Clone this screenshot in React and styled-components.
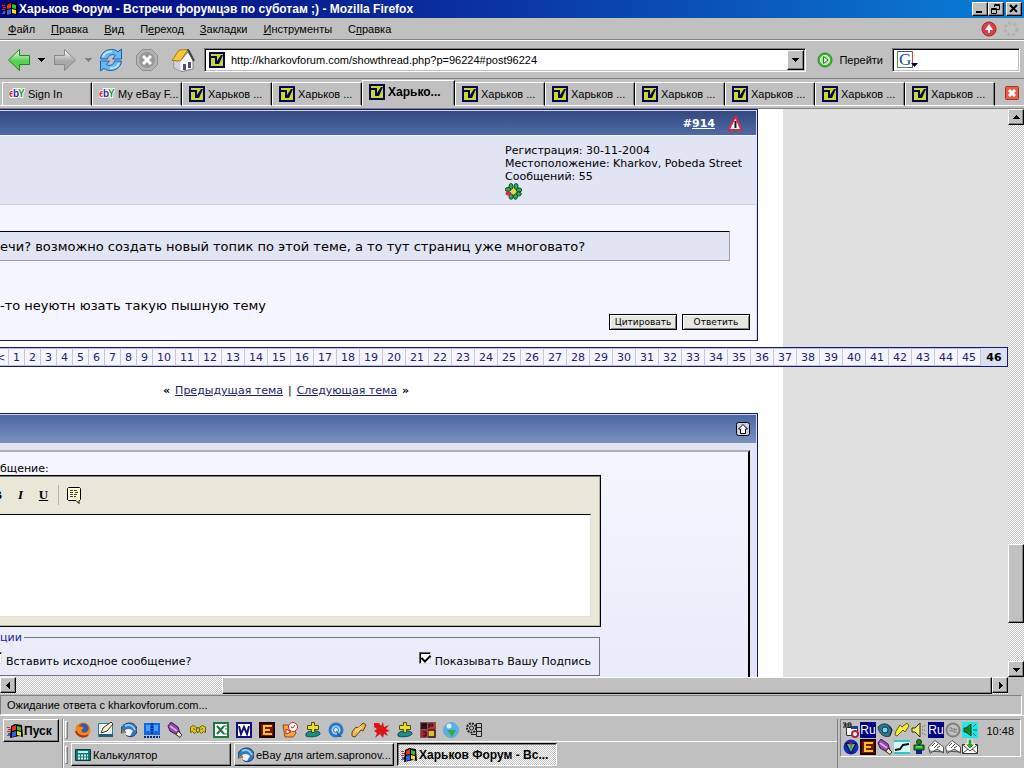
import React from "react";
import styled, { createGlobalStyle, css } from "styled-components";

const GlobalStyle = createGlobalStyle`
  * { box-sizing: border-box; }
  body { margin: 0; background: #c0c0c0; }
  button, input, textarea { font: inherit; color: inherit; border-radius: 0; }
  button { padding: 0; border: 0; background: none; }
  svg { display: block; flex: none; }
`;

const ui = `"Liberation Sans", Arial, sans-serif`;
const verdana = `"DejaVu Sans", Verdana, sans-serif`;

const raised = css`
  border: 1px solid;
  border-color: #fff #000 #000 #fff;
  box-shadow: inset -1px -1px 0 #808080;
`;
const sunken = css`
  border: 1px solid;
  border-color: #808080 #fff #fff #808080;
`;
const dither = css`
  background: repeating-conic-gradient(#fff 0 25%, #c0c0c0 0 50%) 0 0 / 2px 2px;
`;

const Screen = styled.div`
  display: flex;
  flex-direction: column;
  height: 100vh;
  overflow: hidden;
  background: #c0c0c0;
  color: #000;
  font: 11px/16px ${ui};
`;

/* ---------- window frame ---------- */
const TitleBar = styled.header`
  display: flex;
  align-items: center;
  height: 18px;
  padding: 0 2px;
  background: linear-gradient(90deg, #00067c, #0a2f9e 45%, #0a80d4);
  color: #fff;
`;
const Title = styled.h1`
  flex: 1;
  margin: 0 0 0 1px;
  font: bold 12px/16px ${ui};
  white-space: nowrap;
`;
const FrameButton = styled.button`
  ${raised}
  display: flex;
  align-items: center;
  justify-content: center;
  width: 16px;
  height: 14px;
  margin-left: ${(p) => (p.$apart ? "2px" : "0")};
  background: #c0c0c0;
  color: #000;
`;
const MenuBar = styled.nav`
  display: flex;
  align-items: center;
  height: 23px;
  padding-right: 5px;
  border-bottom: 1px solid #fff;
  box-shadow: inset 0 -1px 0 #808080;
`;
const MenuItem = styled.button`
  padding: 0 8px;
  line-height: 16px;
`;
const Spacer = styled.div`
  flex: 1;
`;
const BarIcons = styled.div`
  display: flex;
  gap: 6px;
  align-items: center;
`;
const Toolbar = styled.div`
  display: flex;
  align-items: center;
  height: 38px;
  padding: 0 4px 0 6px;
  border-bottom: 1px solid #808080;
`;
const ToolButton = styled.button`
  display: flex;
  align-items: center;
  justify-content: center;
  width: ${(p) => p.$w || 36}px;
  height: 26px;
`;
const AddressBox = styled.div`
  display: flex;
  flex: 1;
  align-items: center;
  min-width: 0;
  height: 24px;
  margin-left: 8px;
  padding-left: 4px;
  background: #fff;
  border: 1px solid;
  border-color: #808080 #fff #fff #808080;
  box-shadow: inset 1px 1px 0 #000, inset -1px -1px 0 #c0c0c0;
`;
const TextInput = styled.input`
  flex: 1;
  width: 0;
  min-width: 0;
  height: 18px;
  padding: 0 0 0 6px;
  border: 0;
  outline: 0;
  background: none;
`;
const DropButton = styled.button`
  ${raised}
  display: flex;
  align-items: center;
  justify-content: center;
  width: 17px;
  height: 20px;
  margin-right: 1px;
  background: #c0c0c0;
`;
const GoButton = styled.button`
  display: flex;
  align-items: center;
  gap: 6px;
  padding: 0 9px 0 11px;
`;
const SearchBox = styled(AddressBox)`
  flex: 0 0 128px;
  margin-left: 0;
`;

const TabBar = styled.div`
  display: flex;
  align-items: flex-end;
  height: 30px;
  padding: 0 4px 3px 2px;
  background: linear-gradient(#808080, #808080) 0 100% / 100% 1px no-repeat,
    linear-gradient(#fff, #fff) 0 26px / 100% 1px no-repeat;
`;
const Tab = styled.button`
  display: flex;
  flex: 0 1 ${(p) => (p.$active ? 93 : 90)}px;
  align-items: center;
  gap: 3px;
  min-width: 0;
  height: ${(p) => (p.$active ? 26 : 24)}px;
  padding: 0 0 ${(p) => (p.$active ? 2 : 0)}px 6px;
  overflow: hidden;
  white-space: nowrap;
  background: #c0c0c0;
  border: 1px solid;
  border-color: #fff #000 ${(p) => (p.$active ? "#c0c0c0" : "#fff")} #fff;
  box-shadow: inset -1px 0 0 #808080;
  font-size: ${(p) => (p.$active ? 12 : 11)}px;
  font-weight: ${(p) => (p.$active ? "bold" : "normal")};
`;

/* ---------- page view with scroll bars ---------- */
const View = styled.div`
  display: grid;
  flex: 1;
  grid-template: minmax(0, 1fr) 17px / minmax(0, 1fr) 16px;
  min-height: 0;
`;
const VScroll = styled.div`
  ${dither}
  display: flex;
  flex-direction: column;
`;
const HScroll = styled.div`
  ${dither}
  display: flex;
`;
const ScrollButton = styled.button`
  ${raised}
  display: flex;
  flex: none;
  align-items: center;
  justify-content: center;
  width: 16px;
  height: 16px;
  background: #c0c0c0;
`;
const Track = styled.div`
  flex: ${(p) => p.$grow};
`;
const Thumb = styled.div`
  ${raised}
  flex: ${(p) => p.$grow};
  background: #c0c0c0;
`;

const Page = styled.main`
  display: grid;
  grid-template-columns: minmax(0, 1fr) 225px;
  grid-template-rows: 232px 6px 20px 46px 1fr;
  overflow: hidden;
  background: #e0e0e0;
  font: 11px/13px ${verdana};
`;
const Sheet = styled.div`
  grid-area: 1 / 1 / -1 / 2;
  background: #fff;
`;
const Panel = styled.section`
  display: flex;
  flex-direction: column;
  grid-area: ${(p) => p.$row} / 1;
  min-height: 0;
  margin-right: 25px;
  border: 1px solid #1a1a6c;
  border-width: 1px 1px ${(p) => (p.$open ? 0 : 1)}px 0;
  box-shadow: inset -1px 1px 0 #d1d7ee;
  background: #f5f5ff;
  overflow: hidden;
`;
const PanelHead = styled.div`
  display: flex;
  flex: none;
  align-items: center;
  justify-content: flex-end;
  gap: 12px;
  height: ${(p) => p.$h}px;
  margin: 1px 1px 0 0;
  padding-right: ${(p) => p.$pad}px;
  background: ${(p) => p.$bg};
  color: #fff;
  font-weight: bold;
`;
const PostLink = styled.a`
  color: #fff;
`;
const AuthorInfo = styled.div`
  display: flex;
  justify-content: flex-end;
  height: 71px;
  padding: 8px 6px 0 0;
  background: #e1e4f2;
  border-top: 1px solid #f5f5ff;
  border-bottom: 1px solid #d1d1e1;
  white-space: nowrap;
`;
const InfoLines = styled.div`
  width: 246px;
`;
const PostBody = styled.div`
  display: flex;
  flex: 1;
  flex-direction: column;
  padding: 26px 7px 10px 0;
  font-size: 13px;
  line-height: 16px;
  white-space: nowrap;
`;
const Quote = styled.blockquote`
  height: 30px;
  margin: 0 20px 37px 0;
  padding: 7px 0 0;
  background: #e1e4f2;
  border: 1px solid #9c9cac;
  border-top-color: #000;
  border-left: 0;
`;
const PostText = styled.p`
  margin: 0;
`;
const PostActions = styled.div`
  display: flex;
  gap: 5px;
  justify-content: flex-end;
  margin-top: auto;
`;
const SmallButton = styled.button`
  width: 68px;
  height: 16px;
  border: 1px solid #000;
  box-shadow: inset 1px 1px 0 #fff, inset -1px -1px 0 #808080;
  background: #e6e6e2;
  font: 9px/12px ${verdana};
`;

const PageNav = styled.nav`
  display: flex;
  grid-area: 3 / 1 / 4 / -1;
  justify-content: flex-end;
  overflow: hidden;
  background: #f5f5ff;
  border: 1px solid #1a1a6c;
  border-left: 0;
  box-shadow: inset 0 1px 0 #b9bde0, inset 0 -1px 0 #b9bde0, inset -1px 0 0 #b9bde0;
`;
const pageCell = css`
  flex: none;
  border-right: 1px solid #c6c6dc;
  line-height: 19px;
  text-align: center;
`;
const PageLink = styled.a`
  ${pageCell}
  width: ${(p) => p.$w}px;
  color: #22226c;
  text-decoration: none;
`;
const CurrentPage = styled.strong`
  ${pageCell}
  width: 26px;
  border: 0;
  background: #dcdff0;
`;
const ThreadNav = styled.div`
  display: flex;
  grid-area: 4 / 1;
  gap: 5px;
  padding: 17px 0 0 163px;
  white-space: nowrap;
  a { color: #22226c; }
`;

const ReplyFrame = styled.div`
  display: flex;
  flex: 1;
  min-height: 0;
  padding: 7px 7px 0 0;
  background: #e1e4f2;
`;
const ReplyBox = styled.form`
  flex: 1;
  padding-top: 10px;
  border-top: 2px solid #b0b0bc;
  border-right: 2px solid #000;
  background: linear-gradient(#f5f5ff, #e9ebf9);
`;
const EditorBox = styled.div`
  width: 601px;
  max-width: 100%;
  height: 152px;
  padding: 0 9px 0 0;
  background: #e9e8d8;
  border: 1px solid #000;
  border-left: 0;
  box-shadow: inset 0 1px 0 #808080, inset -1px -1px 0 #b4b4a8;
`;
const EditorBar = styled.div`
  display: flex;
  align-items: center;
  height: 38px;
  margin-left: -14px;
`;
const FormatButton = styled.button`
  display: flex;
  align-items: center;
  justify-content: center;
  width: 23px;
  height: 22px;
  font: bold 13px/16px "Liberation Serif", serif;
`;
const BarLine = styled.span`
  width: 1px;
  height: 20px;
  margin: 0 3px;
  background: #b4b4a8;
`;
const Message = styled.textarea`
  display: block;
  width: 100%;
  height: 103px;
  resize: none;
  outline: 0;
  background: #fff;
  border: 1px solid;
  border-color: #000 #e0e0d8 #e0e0d8 #000;
  border-left: 0;
`;
const Options = styled.fieldset`
  display: flex;
  justify-content: space-between;
  width: 600px;
  max-width: 100%;
  height: 45px;
  margin: 4px 0 0;
  padding: 8px 8px 0 0;
  border: 1px solid #74747c;
  border-left: 0;
`;
const Legend = styled.legend`
  padding: 0 2px 0 0;
  color: #22229c;
`;
const Check = styled.label`
  display: flex;
  gap: 4px;
  margin-left: ${(p) => p.$shift || 0}px;
  line-height: 20px;
`;
const CheckBox = styled.input`
  appearance: none;
  width: 12px;
  height: 12px;
  margin: 0;
  background: #fff;
  border: 1px solid;
  border-color: #606060 #dcdcdc #dcdcdc #606060;
  box-shadow: inset 1px 1px 0 #000;
  &:checked::after {
    content: "";
    display: block;
    width: 4px;
    height: 7px;
    margin: 0 0 0 3px;
    border: solid #000;
    border-width: 0 2px 2px 0;
    transform: rotate(45deg);
  }
`;

const StatusBar = styled.footer`
  ${sunken}
  height: 20px;
  margin: 1px 2px 0 0;
  padding: 1px 6px;
`;

/* ---------- task bar ---------- */
const TaskBar = styled.div`
  display: flex;
  height: 53px;
  border-top: 1px solid #fff;
  padding: 3px 3px 0 3px;
`;
const StartButton = styled.button`
  ${raised}
  display: flex;
  align-items: center;
  gap: 1px;
  width: 56px;
  height: 23px;
  padding-left: 3px;
  font-size: 12px;
  font-weight: bold;
`;
const Bands = styled.div`
  flex: 1;
  min-width: 0;
  margin-left: 3px;
  border-left: 1px solid #808080;
  border-right: 1px solid #808080;
  box-shadow: inset 1px 0 0 #fff;
`;
const Band = styled.div`
  display: flex;
  align-items: center;
  gap: ${(p) => p.$gap}px;
  height: ${(p) => p.$h}px;
  padding-left: 2px;
  border-bottom: ${(p) => (p.$line ? "1px solid #fff" : "0")};
`;
const Handle = styled.span`
  width: 3px;
  height: 18px;
  border: 1px solid;
  border-color: #fff #808080 #808080 #fff;
`;
const IconButton = styled.button`
  width: 16px;
  height: 16px;
`;
const TaskButton = styled.button`
  ${raised}
  display: flex;
  align-items: center;
  gap: 2px;
  width: 160px;
  height: 23px;
  padding-left: 3px;
  overflow: hidden;
  white-space: nowrap;
  ${(p) =>
    p.$active &&
    css`
      ${dither}
      border-color: #000 #fff #fff #000;
      box-shadow: inset 1px 1px 0 #808080;
      font-size: 12px;
      font-weight: bold;
    `}
`;
const Tray = styled.div`
  ${sunken}
  display: flex;
  align-items: flex-start;
  justify-content: space-between;
  width: 181px;
  height: 38px;
  margin-left: 2px;
  padding: 2px 6px 0 2px;
`;
const TrayIcons = styled.div`
  display: grid;
  grid-template-columns: repeat(8, 16px);
  gap: 1px;
`;
const Clock = styled.time`
  padding-top: 1px;
`;

/* ---------- drawings ---------- */
const Svg = ({ w = 16, h = 16, box, children, ...rest }) => (
  <svg width={w} height={h} viewBox={box || `0 0 ${w} ${h}`} aria-hidden="true" {...rest}>
    {children}
  </svg>
);
const Triangle = ({ dir = "down", color = "#000" }) => (
  <Svg w={7} h={7} fill={color} shapeRendering="crispEdges">
    <path d={{ down: "M0 2h7v1H6v1H5v1H4v1H3V5H2V4H1V3H0z", up: "M0 5h7V4H6V3H5V2H4V1H3v1H2v1H1v1H0z", left: "M5 0v7H4V6H3V5H2V4H1V3h1V2h1V1h1V0z", right: "M2 0v7h1V6h1V5h1V4h1V3H5V2H4V1H3V0z" }[dir]} />
  </Svg>
);
const WinFlag = () => (
  <Svg>
    <path d="M0 4h3v1H0zM1 6h3v1H1zM0 8h3v1H0zM1 10h3v1H1z" fill="#e02020" />
    <path d="M1 11h3v1H1zM0 12h3v1H0z" fill="#3060f0" />
    <path d="M4 3l4-2 7 1 1 12-4-1-4 1-5 1z" fill="#000" />
    <path d="M5 4l4-2v5L5 8z" fill="#f03020" />
    <path d="M10 3l4 1v4l-4-1z" fill="#30c030" />
    <path d="M5 9l4-1v5l-4 1z" fill="#3060f0" />
    <path d="M10 8l4 1v4l-4-1z" fill="#f0e020" />
  </Svg>
);
const Favicon = () => (
  <Svg>
    <path fill="#08084c" d="M0 0h16v16H0z" />
    <path fill="#c8d830" d="M2 2h12v12H2z" />
    <path fill="#08084c" d="M2 4h6v5l4-6h2l-4 9H6V6H2z" />
  </Svg>
);
const Ebay = () => (
  <Svg fontFamily="Liberation Sans, sans-serif" fontWeight="bold" fontSize="10" stroke="#fff" strokeWidth="2" paintOrder="stroke">
    <text x="0" y="11" fill="#e01828">e</text>
    <text x="4" y="11" fill="#2828a0">b</text>
    <text x="9" y="11" fill="#289830">Y</text>
  </Svg>
);
const NavArrow = ({ fill, line, flip }) => (
  <Svg w={24} h={24} style={flip ? { transform: "scaleX(-1)" } : undefined}>
    <defs>
      <linearGradient id={flip ? "fw" : "bk"} x1="0" y1="0" x2="0" y2="1">
        <stop offset="0" stopColor="#fff" />
        <stop offset=".55" stopColor={fill} />
      </linearGradient>
    </defs>
    <path d="M1.500 12 12.500 1.500v6h10v9h-10v6z" fill={`url(#${flip ? "fw" : "bk"})`} stroke={line} strokeLinejoin="round" />
  </Svg>
);
const Reload = () => (
  <Svg w={24} h={24} fill="#68b8f0" stroke="#1860b0" strokeLinejoin="round">
    <path d="M1.500 11C2 5 7 1.500 12.500 1.500c3 0 5 .8 6.500 2.300L22.500 1v10h-9l3-3.500c-3-2-7-.5-8 3.500z" />
    <path d="M22.500 13C22 19 17 22.500 11.500 22.500c-3 0-5-.8-6.500-2.300L1.500 23V13h9l-3 3.500c3 2 7 .5 8-3.500z" />
    <path d="M4 9c1-4 5-6 9-5.500M20 15c-1 4-5 5.500-9 5" fill="none" stroke="#b8e4ff" strokeWidth="2" />
  </Svg>
);
const Stop = () => (
  <Svg w={24} h={24}>
    <path d="M7.500 1.500h9l6 6v9l-6 6h-9l-6-6v-9z" fill="#b4b4b4" stroke="#8c8c8c" />
    <circle cx="12" cy="12" r="8" fill="#989898" />
    <path d="M8 8l8 8M16 8l-8 8" stroke="#fff" strokeWidth="3" />
  </Svg>
);
const Home = () => (
  <Svg w={24} h={24} strokeLinejoin="round">
    <path d="M3 12h7l7-8 5 8v9l-11 2.500L3 20z" fill="#fafaff" stroke="#808088" />
    <path d="M3.500 12h6v11l-6-3z" fill="#d0d0d8" />
    <path d="M1 12.500 8 2l9-.5L9.500 13z" fill="#f4c838" stroke="#a87818" />
    <path d="M17 1.500 23 13" stroke="#404048" strokeWidth="2" />
    <path d="M12 16h3v6h-3zM17 14h3v6h-3z" fill="#505068" />
  </Svg>
);
const Go = () => (
  <Svg>
    <circle cx="8" cy="8" r="7" fill="#48b838" stroke="#208820" />
    <circle cx="8" cy="8" r="4.500" fill="#a0e090" stroke="#fff" />
    <path d="M6.500 4.500 11 8l-4.500 3.500z" fill="#fff" stroke="#208820" />
  </Svg>
);
const Google = () => (
  <Svg w={21} h={18}>
    <path d="M.5.5h15v16H.5z" fill="#fff" stroke="#3858b0" />
    <path d="M15.500 1v10" stroke="#d84030" fill="none" />
    <path d="M.5 1v15.500H11" stroke="#40a040" fill="none" />
    <text x="2" y="14" fontFamily="Liberation Serif, serif" fontSize="17" fill="#2848a8">G</text>
    <path d="M14 12h7l-3.500 4z" fill="#000" />
  </Svg>
);
const Update = () => (
  <Svg>
    <circle cx="8" cy="8" r="7" fill="#d84048" stroke="#a82028" />
    <path d="M8 3l4 6h-3v3H7V9H4z" fill="#fff" />
  </Svg>
);
const Throbber = () => (
  <Svg>
    <circle cx="8" cy="8" r="6" fill="none" stroke="#b2b2b2" strokeWidth="3" strokeDasharray="3 2" />
  </Svg>
);
const CloseTab = () => (
  <Svg>
    <rect x="1.500" y="1.500" width="13" height="13" rx="1" fill="#e06050" stroke="#b03020" />
    <path d="M5 5l6 6M11 5l-6 6" stroke="#fff" strokeWidth="3" />
  </Svg>
);
const Report = () => (
  <Svg>
    <path d="M8.500 1.500 14.500 15h-13z" fill="#fff" stroke="#d82848" strokeWidth="2" strokeLinejoin="round" />
    <path d="M7.500 6h2v7h-2z" fill="#101020" />
  </Svg>
);
const Flower = () => (
  <Svg w={17} h={17}>
    <g fill="#38a850" stroke="#0c4c20">
      <ellipse cx="6" cy="3.500" rx="2" ry="3" /><ellipse cx="11" cy="3.500" rx="2" ry="3" />
      <ellipse cx="14" cy="7" rx="2.800" ry="2" /><ellipse cx="13.500" cy="11" rx="2.800" ry="2" />
      <ellipse cx="10.500" cy="13.500" rx="2" ry="2.800" /><ellipse cx="6" cy="13.500" rx="2" ry="2.800" />
      <ellipse cx="3" cy="6.500" rx="2.800" ry="2" />
    </g>
    <ellipse cx="3.500" cy="10.500" rx="3" ry="2" fill="#d02850" />
    <circle cx="8.500" cy="8.500" r="2.500" fill="#e0d840" />
  </Svg>
);
const Collapse = () => (
  <Svg w={14} h={14}>
    <rect x=".5" y=".5" width="13" height="13" rx="2" fill="#c8d0e4" stroke="#000" />
    <path d="M7 2.500 11.500 7H9.500v4.500h-5V7h-2z" fill="#fff" stroke="#000" />
  </Svg>
);
const QuoteIcon = () => (
  <Svg w={14} h={17}>
    <path d="M1.500.5h11l1 1v11l-1 1H12v3l-3-3H1.500l-1-1v-11z" fill="#ffffd0" stroke="#000" />
    <path d="M3 3.500h8M3 5.500h4m1 0h3M3 7.500h3m1 0h4M3 9.500h6" stroke="#404040" strokeDasharray="3 1" />
  </Svg>
);

/* small desktop icons, one drawing per program */
const glyphs = {
  firefox: (
    <>
      <circle cx="8" cy="8" r="7.500" fill="#e87818" />
      <circle cx="8.500" cy="6.500" r="5" fill="#3858a8" />
      <path d="M1 4l2-2 1 3c2-1 4 0 5 1-2 1-3 2-2 4 3 2 6 0 8-4 1 6-3 9.500-8 9-5-.8-7-5-6-11z" fill="#f08820" />
      <path d="M1 9c1 5 8 7 12 4" fill="none" stroke="#b83010" strokeWidth="2" />
    </>
  ),
  pen: (
    <>
      <path d="M.5 1.500h14v13H.5z" fill="#f0f4f4" stroke="#288098" />
      <path d="M1 12h14v3H1z" fill="#20607c" />
      <path d="M3 11l2-5 8-6 2 2-6 7z" fill="#f8f0d0" stroke="#403010" />
    </>
  ),
  bird: (
    <>
      <path d="M0 7C1 3 5 1 9 1s8 4 7 8c-1 6-8 7-11 4l1-3-6 1z" fill="#3878b8" stroke="#183c70" />
      <path d="M4 8c3-2 6-1 8 1l-3 5-4-1z" fill="#f0f4f8" />
      <path d="M4 4c4-2 8-1 10 4" stroke="#90c8f0" fill="none" strokeWidth="2" />
      <path d="M1 10h4" stroke="#c07830" strokeWidth="2" />
    </>
  ),
  book: (
    <>
      <path d="M0 1h16v12H0z" fill="#1068e8" />
      <path d="M2 4h4M2 6h4M2 8h4M10 4h4M10 6h4M10 8h4" stroke="#80e0ff" />
      <path d="M8 1v12M0 15h16" stroke="#002880" strokeWidth="2" strokeDasharray="2 1" />
    </>
  ),
  pencil: (
    <>
      <path d="M1 4l3-4 7 5 2 6-3 2-7-4z" fill="#9048a8" stroke="#401858" />
      <path d="M3 4l7 5" stroke="#e0a8e8" strokeWidth="2" />
      <path d="M11 9l4 4-2 2.500-4-3z" fill="#f0e8c0" stroke="#303030" />
    </>
  ),
  bat: (
    <g fill="#d8c820" stroke="#686008">
      <path d="M.5 5l3-1.500 3 2v4l-2 2-2-2-2 1zM15.500 5l-3-1.500-3 2v4l2 2 2-2 2 1z" />
      <path d="M6 8l2-3 2 3-2 3z" />
      <path d="M3 7h2M11 7h2" />
    </g>
  ),
  excel: (
    <>
      <path d="M1 1h14v14H1z" fill="#fff" stroke="#207840" strokeWidth="2" />
      <path d="M4 4l7 8M11 4l-7 8" stroke="#207840" strokeWidth="2" />
      <path d="M11 4h3M12 7h2M11 12h3" stroke="#207840" />
    </>
  ),
  word: (
    <>
      <path d="M1 1h14v14H1z" fill="#fff" stroke="#101078" strokeWidth="2" />
      <path d="M3 4l2 8 3-7 3 7 2-8" stroke="#101078" strokeWidth="2" fill="none" />
    </>
  ),
  edit: (
    <>
      <path d="M1 1h14v14H1z" fill="#701810" stroke="#200000" strokeWidth="2" />
      <path d="M13 4H5v8h8M5 8h6" stroke="#ffc020" strokeWidth="2" fill="none" />
    </>
  ),
  chat: (
    <>
      <path d="M1 3h10l3 8-3 4H3z" fill="#f8a838" stroke="#a04010" />
      <circle cx="11" cy="5" r="4.500" fill="#fff" stroke="#c02828" />
      <path d="M9 5l2 1 2-3M4 7v5l5-2z" stroke="#c02828" fill="#fff" />
    </>
  ),
  add: (
    <>
      <path d="M1 12c0-3 12-5 14-1 1 3-9 5-14 3z" fill="#189090" stroke="#084850" />
      <path d="M6.500.5h3v3h4v4h-4v3h-3v-3h-4v-4h4z" fill="#e8e020" stroke="#505000" />
    </>
  ),
  quick: (
    <>
      <circle cx="8" cy="8" r="6" fill="#b8d8f0" stroke="#2878c8" strokeWidth="3" />
      <circle cx="8" cy="8" r="2.500" fill="#e8f4fc" stroke="#2870b8" />
      <path d="M8 8l6 7h-4z" fill="#2060a8" />
    </>
  ),
  amp: (
    <>
      <path d="M1 10l4-5 2 1 5-5 3 2-3 6-2-1-6 7-3-1z" fill="#f0b848" stroke="#684010" />
      <path d="M4 9l6-5M6 10l5-5" stroke="#fff0b0" />
    </>
  ),
  splat: (
    <path d="M0 1h5l2 3 2-4 1 5 5-2-3 4 4 2-4 1 2 4-4-2-1 4-3-4-5 4 2-5-3-2 3-2-3-2z" fill="#d81818" />
  ),
  media: (
    <>
      <path d="M0 0h16v16H0z" fill="#905050" />
      <path d="M1 1h6v6H1z" fill="#301820" /><path d="M8 1h7v6H8z" fill="#c83030" />
      <path d="M1 8h6v7H1z" fill="#b02030" /><path d="M9 9h5v5H9z" fill="#e0c020" />
      <path d="M2 6V2l2 2 2-2v4M9 6V2h4v2H9M3 10h3v4H3M8 8h7v7H8" stroke="#101010" fill="none" />
    </>
  ),
  globe: (
    <>
      <circle cx="8" cy="8" r="7.500" fill="#58b0e8" stroke="#60a8d8" />
      <path d="M4 8h9l-4 7z" fill="#38a848" />
      <circle cx="6" cy="4" r="2.500" fill="#d8f0ff" />
    </>
  ),
  film: (
    <g fill="none" stroke="#202020">
      <circle cx="5.500" cy="6" r="4.500" strokeWidth="2" strokeDasharray="2 1" />
      <circle cx="5.500" cy="6" r="2" />
      <path d="M10.500 1.500h5v13h-5zM10 5.500h6M10 9.500h6M5 12.500h6" />
    </g>
  ),
  calc: (
    <>
      <path d="M.5 2.500h15v11H.5z" fill="#107878" stroke="#043c3c" />
      <path d="M3 4h10v2H3z" fill="#c0f0e0" />
      <path d="M3 8.500h10M3 11.500h10" stroke="#e0f0f0" strokeWidth="2" strokeDasharray="2 1" />
    </>
  ),
  calendar: (
    <>
      <path d="M3.500 5.500h11v8h-11z" fill="#fff" stroke="#303030" />
      <path d="M0 1h3v2H1h2v2H0M5 1h3v4H5zM5 3h3" stroke="#101010" fill="none" />
      <path d="M8 4h7v3H8z" fill="#2040a0" />
      <circle cx="12" cy="12" r="3" fill="#fff" stroke="#b02040" strokeWidth="2" />
    </>
  ),
  eye: (
    <>
      <path d="M1 5c4-5 12-4 14 3l-2 6c-6 2-11-2-12-9z" fill="#28788c" stroke="#303840" />
      <circle cx="8" cy="8" r="3" fill="#80d0e0" stroke="#084058" />
      <path d="M12 4l3 4-2 5" fill="none" stroke="#202020" />
    </>
  ),
  bolt: <path d="M2 9l4-6 2 2 5-4 2 3-4 6-2-2-6 6-2-1z" fill="#f0f030" stroke="#606000" />,
  speaker: (
    <>
      <path d="M1 6h3l5-5v14l-5-5H1z" fill="#f0e870" stroke="#303000" />
      <path d="M11 5l4-2M11 8h4M11 11l4 2" stroke="#606060" strokeDasharray="1 1" />
    </>
  ),
  gray: (
    <g fill="none" stroke="#808080">
      <circle cx="8" cy="8" r="6.500" strokeWidth="2" />
      <path d="M4 6h3v4M12 10H9V6M4 9l3-1M12 7l-3 1" />
    </g>
  ),
  sound: (
    <>
      <path d="M0 0h16v16H0z" fill="#20e8e8" />
      <path d="M2 6h2l5-4v12l-5-4H2z" fill="#108828" stroke="#044010" />
      <path d="M11 5l3-3M11 8h4M11 11l3 3" stroke="#306070" />
    </>
  ),
  drop: (
    <>
      <circle cx="8" cy="8" r="7.500" fill="#1028c8" />
      <path d="M2 4h12L8 15z" fill="#101010" />
      <path d="M4 5h8l-4 8z" fill="#48c888" />
      <path d="M8 3v7M6 5h4" stroke="#c02040" />
    </>
  ),
  wave: (
    <>
      <path d="M0 1h16v14H0z" fill="#d8f8f8" />
      <path d="M0 2h16M0 14h16" stroke="#28c8c8" strokeWidth="2" />
      <path d="M1 11l5-1 3-4 6-1" stroke="#101010" fill="none" strokeWidth="2" />
    </>
  ),
  man: (
    <>
      <circle cx="8" cy="3" r="2.500" fill="#208820" stroke="#083808" />
      <path d="M3 6h10v5H3z" fill="#209830" stroke="#083808" />
      <path d="M5 11h6v4H5z" fill="#102080" />
      <path d="M5 8h6" stroke="#c0f0a0" />
    </>
  ),
  card: (
    <>
      <path d="M.5 8 7 1.500 15.500 8v6L9 10l-7 4.500z" fill="#fff" stroke="#505050" />
      <path d="M4 7l3-3M6 9l4-4M9 9l3-2M1 12l14 1" stroke="#505050" />
    </>
  ),
  mail: (
    <>
      <path d="M.5 5.500h15v9H.5z" fill="#fff" stroke="#303030" />
      <path d="M1 6l7 6 7-6M1 14l5-4M15 14l-5-4" stroke="#505050" fill="none" />
      <path d="M6 0h4v5h3L8 10 3 5h3z" fill="#30a030" stroke="#fff" />
    </>
  ),
};
const Glyph = ({ name }) => <Svg>{glyphs[name]}</Svg>;

const LangMark = styled.span`
  width: 16px;
  height: 16px;
  background: #000080;
  color: #fff;
  font-size: 12px;
  text-align: center;
`;

const menus = [
  ["", "Ф", "айл"], ["", "П", "равка"], ["", "В", "ид"], ["П", "е", "реход"],
  ["", "З", "акладки"], ["", "И", "нструменты"], ["С", "п", "равка"],
];
const tabs = ["Sign In", "My eBay F...", "Харьков ...", "Харьков ...", "Харько...", ...Array(6).fill("Харьков ...")];
const pages = Array.from({ length: 45 }, (_, i) => i + 1);
const launchers = ["firefox", "pen", "bird", "book", "pencil", "bat", "excel", "word", "edit", "chat", "add", "quick", "amp", "splat", "add", "media", "globe", "film"];
const tray = ["calendar", "Ru", "eye", "bolt", "speaker", "Ru", "gray", "sound", "drop", "edit", "pencil", "wave", "man", "card", "card", "mail"];

export default function App() {
  return (
    <Screen>
      <GlobalStyle />
      <TitleBar>
        <WinFlag />
        <Title>Харьков Форум - Встречи форумцэв по суботам ;) - Mozilla Firefox</Title>
        <FrameButton aria-label="Minimize">
          <Svg w={10} h={10}><path d="M1 7h6v2H1z" /></Svg>
        </FrameButton>
        <FrameButton aria-label="Restore">
          <Svg w={10} h={10} fill="none" stroke="#000"><path d="M3.500 3V.5h5v5H6M3 1.500h6M.5 4.500h5v5h-5zM0 5.500h6" /></Svg>
        </FrameButton>
        <FrameButton $apart aria-label="Close">
          <Svg w={10} h={10}><path d="M1 1l7 7M8 1L1 8" stroke="#000" strokeWidth="2" /></Svg>
        </FrameButton>
      </TitleBar>
      <MenuBar>
        {menus.map(([pre, key, post]) => (
          <MenuItem key={post + key}>{pre}<u>{key}</u>{post}</MenuItem>
        ))}
        <Spacer />
        <BarIcons><Update /><Throbber /></BarIcons>
      </MenuBar>
      <Toolbar>
        <ToolButton $w={25} aria-label="Back"><NavArrow fill="#58d050" line="#208820" /></ToolButton>
        <ToolButton $w={21} aria-label="Back history"><Triangle /></ToolButton>
        <ToolButton $w={26} aria-label="Forward"><NavArrow flip fill="#a8a8a8" line="#888" /></ToolButton>
        <ToolButton $w={20} aria-label="Forward history"><Triangle color="#808080" /></ToolButton>
        <ToolButton $w={26} aria-label="Reload"><Reload /></ToolButton>
        <ToolButton $w={46} aria-label="Stop"><Stop /></ToolButton>
        <ToolButton $w={26} aria-label="Home"><Home /></ToolButton>
        <AddressBox>
          <Favicon />
          <TextInput aria-label="Address" defaultValue="http://kharkovforum.com/showthread.php?p=96224#post96224" />
          <DropButton aria-label="Address list"><Triangle /></DropButton>
        </AddressBox>
        <GoButton><Go />Перейти</GoButton>
        <SearchBox>
          <Google />
          <TextInput aria-label="Search" />
        </SearchBox>
      </Toolbar>
      <TabBar>
        {tabs.map((t, i) => (
          <Tab key={i} $active={i === 4}>
            {i < 2 ? <Ebay /> : <Favicon />}
            {t}
          </Tab>
        ))}
        <Spacer />
        <ToolButton $w={16} aria-label="Close tab"><CloseTab /></ToolButton>
      </TabBar>

      <View>
        <Page>
          <Sheet />
          <Panel $row={1}>
            <PanelHead $h={24} $pad={13} $bg="linear-gradient(#34497e, #4e6aa6)">
              <span>#<PostLink href="#post96224">914</PostLink></span>
              <Report />
            </PanelHead>
            <AuthorInfo>
              <InfoLines>
                Регистрация: 30-11-2004<br />
                Местоположение: Kharkov, Pobeda Street<br />
                Сообщений: 55
                <Flower />
              </InfoLines>
            </AuthorInfo>
            <PostBody>
              <Quote>ечи? возможно создать новый топик по этой теме, а то тут страниц уже многовато?</Quote>
              <PostText>-то неуютн юзать такую пышную тему</PostText>
              <PostActions>
                <SmallButton>Цитировать</SmallButton>
                <SmallButton>Ответить</SmallButton>
              </PostActions>
            </PostBody>
          </Panel>

          <PageNav>
            <PageLink $w={16} href="#prev">&lt;</PageLink>
            {pages.map((n) => (
              <PageLink key={n} $w={n < 10 ? 16 : 23} href={`#page${n}`}>{n}</PageLink>
            ))}
            <CurrentPage>46</CurrentPage>
          </PageNav>

          <ThreadNav>
            <b>«</b>
            <a href="#older">Предыдущая тема</a>
            <span>|</span>
            <a href="#newer">Следующая тема</a>
            <b>»</b>
          </ThreadNav>

          <Panel $row={5} $open>
            <PanelHead $h={28} $pad={6} $bg="linear-gradient(#4a67a3, #7b91bd)">
              <button aria-label="Collapse"><Collapse /></button>
            </PanelHead>
            <ReplyFrame>
              <ReplyBox>
                <label htmlFor="message">бщение:</label>
                <EditorBox>
                  <EditorBar>
                    <FormatButton type="button">B</FormatButton>
                    <FormatButton type="button"><i>I</i></FormatButton>
                    <FormatButton type="button"><u>U</u></FormatButton>
                    <BarLine />
                    <FormatButton type="button" aria-label="Quote"><QuoteIcon /></FormatButton>
                  </EditorBar>
                  <Message id="message" />
                </EditorBox>
                <Options>
                  <Legend>ции</Legend>
                  <Check $shift={-10}>
                    <CheckBox type="checkbox" />Вставить исходное сообщение?
                  </Check>
                  <Check>
                    <CheckBox type="checkbox" defaultChecked />Показывать Вашу Подпись
                  </Check>
                </Options>
              </ReplyBox>
            </ReplyFrame>
          </Panel>
        </Page>
        <VScroll>
          <ScrollButton aria-label="Up"><Triangle dir="up" /></ScrollButton>
          <Track $grow={421} />
          <Thumb $grow={77} />
          <Track $grow={38} />
          <ScrollButton aria-label="Down"><Triangle /></ScrollButton>
        </VScroll>
        <HScroll>
          <ScrollButton aria-label="Left"><Triangle dir="left" /></ScrollButton>
          <Track $grow={206} />
          <Thumb $grow={770} />
          <ScrollButton aria-label="Right"><Triangle dir="right" /></ScrollButton>
        </HScroll>
      </View>

      <StatusBar>Ожидание ответа с kharkovforum.com...</StatusBar>
      <TaskBar>
        <StartButton><WinFlag />Пуск</StartButton>
        <Bands>
          <Band $h={23} $gap={7} $line>
            <Handle />
            {launchers.map((n, i) => (
              <IconButton key={i} aria-label={n}><Glyph name={n} /></IconButton>
            ))}
          </Band>
          <Band $h={25} $gap={3}>
            <Handle />
            <TaskButton><Glyph name="calc" />Калькулятор</TaskButton>
            <TaskButton><Glyph name="bird" />eBay для artem.sapronov...</TaskButton>
            <TaskButton $active><WinFlag />Харьков Форум - Вс...</TaskButton>
          </Band>
        </Bands>
        <Tray>
          <TrayIcons>
            {tray.map((n, i) => (n === "Ru" ? <LangMark key={i}>Ru</LangMark> : <Glyph key={i} name={n} />))}
          </TrayIcons>
          <Clock>10:48</Clock>
        </Tray>
      </TaskBar>
    </Screen>
  );
}
